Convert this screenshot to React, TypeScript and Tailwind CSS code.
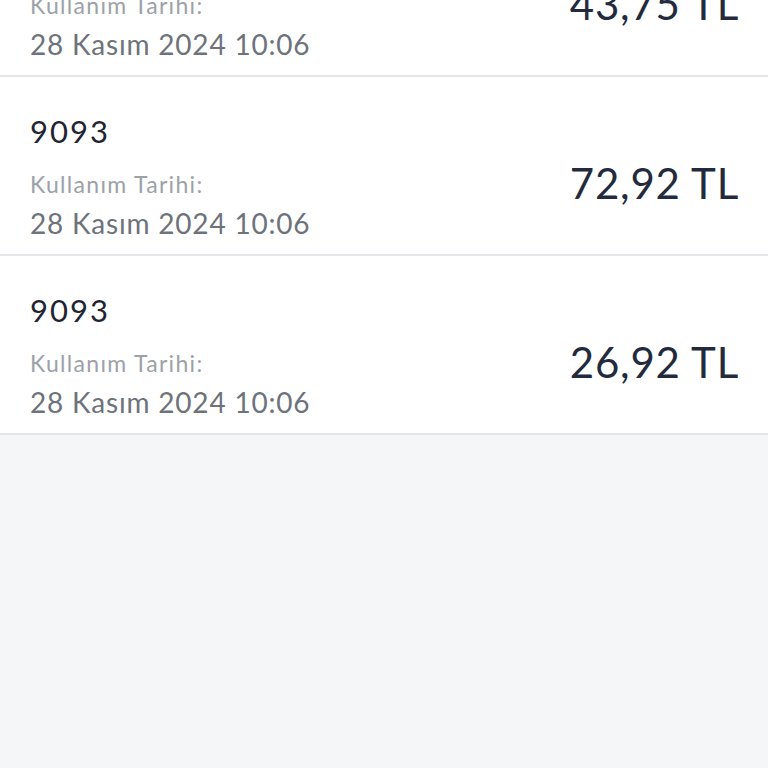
const items = [
  { code: '9093', date: '28 Kasım 2024 10:06', amount: '43,75 TL' },
  { code: '9093', date: '28 Kasım 2024 10:06', amount: '72,92 TL' },
  { code: '9093', date: '28 Kasım 2024 10:06', amount: '26,92 TL' },
];

function UsageRow({ code, date, amount }: { code: string; date: string; amount: string }) {
  return (
    <div className="flex items-center justify-between bg-white pl-[30px] pr-[30px] pt-[36px] pb-[14px] border-b-2 border-[#e4e5e9]">
      <div className="flex flex-col">
        <span className="text-[31px] leading-[36px] tracking-[2px] text-[#1f2433]">{code}</span>
        <span className="mt-[21px] text-[23px] leading-[28px] tracking-[1.3px] text-[#9ca1a9]">Kullanım Tarihi:</span>
        <span className="mt-[8px] text-[28px] leading-[34px] tracking-[0.8px] text-[#6d727b]">{date}</span>
      </div>
      <span className="mt-[13px] mr-[-1px] text-[42px] leading-[50px] tracking-[0.8px] text-[#232a3d]">{amount}</span>
    </div>
  );
}

export default function App() {
  return (
    <div
      className="h-[768px] w-full overflow-hidden bg-[#f5f6f8]"
      style={{ fontFamily: 'Lato, "Noto Sans", sans-serif' }}
    >
      <div className="mt-[-102px] flex flex-col">
        {items.map((item, i) => (
          <UsageRow key={i} {...item} />
        ))}
      </div>
    </div>
  );
}
